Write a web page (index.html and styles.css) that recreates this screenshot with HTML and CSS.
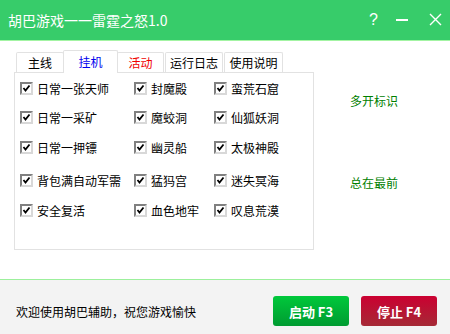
FILE: index.html
```html
<!DOCTYPE html>
<html lang="zh-CN">
<head>
    <meta charset="UTF-8">
    <title>胡巴游戏一一雷霆之怒1.0</title>
    <link rel="stylesheet" href="styles.css">
</head>
<body>
    <div class="window">
        <header class="titlebar">
            <span class="title">胡巴游戏一一雷霆之怒1.0</span>
            <div class="controls">
                <span class="help">?</span>
                <svg class="ctrl" width="12" height="12" viewBox="0 0 12 12"><rect x="0" y="5" width="12" height="2" fill="#fff"/></svg>
                <svg class="ctrl" width="13" height="13" viewBox="0 0 13 13"><path d="M1 1 L12 12 M12 1 L1 12" stroke="#fff" stroke-width="1.4" fill="none"/></svg>
            </div>
        </header>

        <main class="content">
            <div class="tabview">
                <div class="tabs">
                    <div class="tab tab-main">主线</div>
                    <div class="tab tab-idle active">挂机</div>
                    <div class="tab tab-event">活动</div>
                    <div class="tab tab-log">运行日志</div>
                    <div class="tab tab-help">使用说明</div>
                </div>
                <div class="panel">
                    <label class="opt"><span class="box"></span>日常一张天师</label>
                    <label class="opt"><span class="box"></span>封魔殿</label>
                    <label class="opt"><span class="box"></span>蛮荒石窟</label>

                    <label class="opt"><span class="box"></span>日常一采矿</label>
                    <label class="opt"><span class="box"></span>魔蛟洞</label>
                    <label class="opt"><span class="box"></span>仙狐妖洞</label>

                    <label class="opt"><span class="box"></span>日常一押镖</label>
                    <label class="opt"><span class="box"></span>幽灵船</label>
                    <label class="opt"><span class="box"></span>太极神殿</label>

                    <label class="opt"><span class="box"></span>背包满自动军需</label>
                    <label class="opt"><span class="box"></span>猛犸宫</label>
                    <label class="opt"><span class="box"></span>迷失冥海</label>

                    <label class="opt"><span class="box"></span>安全复活</label>
                    <label class="opt"><span class="box"></span>血色地牢</label>
                    <label class="opt"><span class="box"></span>叹息荒漠</label>
                </div>
            </div>
            <div class="side">
                <span class="flag">多开标识</span>
                <span class="flag flag-top">总在最前</span>
            </div>
        </main>

        <footer class="statusbar">
            <span class="welcome">欢迎使用胡巴辅助，祝您游戏愉快</span>
            <div class="actions">
                <button class="btn btn-start">启动 F3</button>
                <button class="btn btn-stop">停止 F4</button>
            </div>
        </footer>
    </div>
</body>
</html>
```

FILE: styles.css
```css
* {
    box-sizing: border-box;
}

body {
    margin: 0;
    font-family: "Noto Sans CJK SC", "Liberation Sans", sans-serif;
    font-size: 12px;
    color: #000;
    background: #fff;
}

.window {
    width: 450px;
    height: 334px;
    display: flex;
    flex-direction: column;
    overflow: hidden;
}

/* title bar */
.titlebar {
    height: 41px;
    flex: none;
    display: flex;
    align-items: center;
    padding: 0 8px 1px 8px;
    background: #37cc6a;
    border-bottom: 1px solid #a3f4a3;
    color: #fff;
}
.title {
    font-size: 14px;
    line-height: 1;
}
.controls {
    margin-left: auto;
    display: flex;
    align-items: center;
}
.help {
    font-family: "Liberation Sans", sans-serif;
    font-size: 16px;
    width: 10px;
    margin-right: 17px;
}
.ctrl {
    display: block;
}
.ctrl + .ctrl {
    margin-left: 21px;
}

/* content */
.content {
    flex: 1;
    display: flex;
    padding: 9px 0 0 14px;
}
.tabview {
    width: 300px;
}
.tabs {
    display: flex;
    align-items: flex-end;
    padding-left: 2px;
    height: 22px;
}
.tab {
    height: 20px;
    line-height: 19px;
    text-align: center;
    background: #fff;
    border: 1px solid #e2e2e2;
    border-bottom: none;
    border-radius: 2px 2px 0 0;
}
.tab-main  { width: 48px; }
.tab-idle  { width: 55px; }
.tab-event { width: 47px; }
.tab-log   { width: 58px; margin-left: 1px; }
.tab-help  { width: 59px; margin-left: 1px; }
.tab.active {
    height: 23px;
    line-height: 21px;
    margin-bottom: -1px;
    margin-left: -1px;
    margin-right: -1px;
    position: relative;
    z-index: 1;
    color: #0000ee;
}
.tab-event {
    color: #f00000;
}

.panel {
    height: 178px;
    border: 1px solid #e2e2e2;
    display: grid;
    grid-template-columns: 114px 80px 1fr;
    grid-template-rows: 29px 30px 33px 30px 30px;
    align-content: start;
    padding: 9px 0 0 5px;
}
.opt {
    display: flex;
    align-items: center;
    height: 13px;
    white-space: nowrap;
}
.box {
    width: 13px;
    height: 13px;
    margin-right: 4px;
    border: 2px solid;
    border-color: #808080 #d8d8d8 #d8d8d8 #808080;
    background: #fff url("data:image/svg+xml,%3Csvg xmlns='http://www.w3.org/2000/svg' width='9' height='9'%3E%3Cpath d='M1.5 4 L3.5 6.5 L7.5 1.5' stroke='%23000' stroke-width='1.8' fill='none'/%3E%3C/svg%3E") center / 9px 9px no-repeat;
}

.side {
    display: flex;
    flex-direction: column;
    margin-left: 36px;
    padding-top: 43px;
}
.flag {
    color: #008000;
    line-height: 16px;
}
.flag-top {
    margin-top: 66px;
}

/* status bar */
.statusbar {
    height: 55px;
    flex: none;
    display: flex;
    align-items: center;
    padding: 8px 13px 0 16px;
    background: #f3f3f3;
    border-top: 1px solid #9cf09c;
}
.actions {
    margin-left: auto;
    display: flex;
    gap: 12px;
}
.btn {
    width: 76px;
    height: 30px;
    border: none;
    border-radius: 3px;
    color: #fff;
    font-family: "Noto Sans CJK SC", "Liberation Sans", sans-serif;
    font-size: 13px;
    font-weight: bold;
    cursor: pointer;
}
.btn-start {
    background: linear-gradient(#00c83b, #009b31);
}
.btn-stop {
    background: linear-gradient(#cb0031, #a52a36);
}
```
